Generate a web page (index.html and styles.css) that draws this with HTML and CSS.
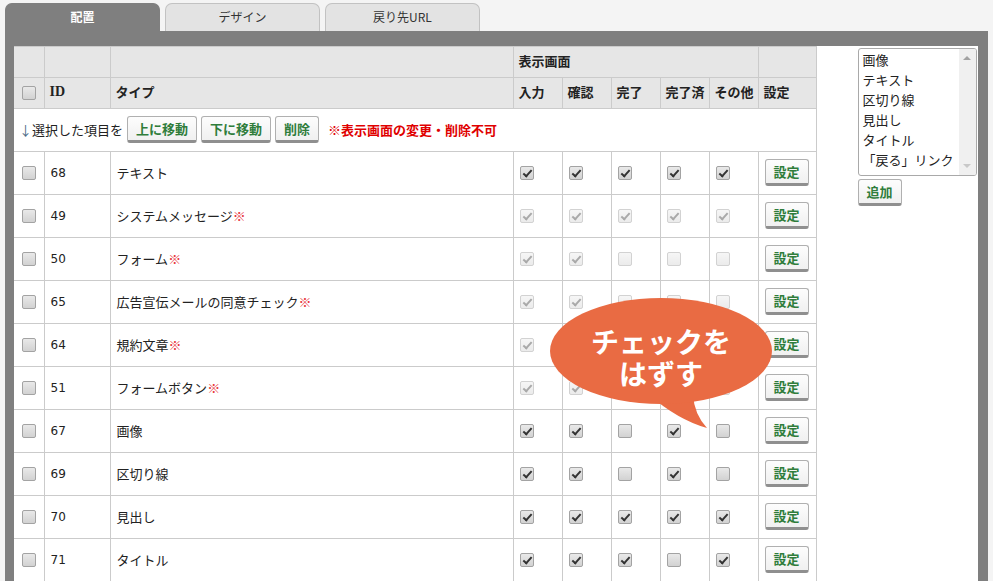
FILE: index.html
```html
<!DOCTYPE html>
<html lang="ja">
<head>
	<meta charset="UTF-8">
	<title>配置</title>
	<link rel="stylesheet" href="styles.css">
</head>
<body>
	<ul class="tabs">
		<li class="tab tab-active">配置</li>
		<li class="tab">デザイン</li>
		<li class="tab">戻り先URL</li>
	</ul>

	<div class="panel">
		<div class="sheet">
			<table class="parts">
				<colgroup>
					<col class="w-check">
					<col class="w-id">
					<col class="w-type">
					<col class="w-screen">
					<col class="w-screen">
					<col class="w-screen">
					<col class="w-screen">
					<col class="w-screen">
					<col class="w-edit">
				</colgroup>
				<thead>
					<tr class="head-top">
						<th></th>
						<th></th>
						<th></th>
						<th colspan="5">表示画面</th>
						<th></th>
					</tr>
					<tr class="head-sub">
						<th class="c-check"><input type="checkbox" class="cb"></th>
						<th class="c-id">ID</th>
						<th>タイプ</th>
						<th>入力</th>
						<th>確認</th>
						<th>完了</th>
						<th>完了済</th>
						<th>その他</th>
						<th>設定</th>
					</tr>
				</thead>
				<tbody>
					<tr class="actions">
						<td colspan="9">
							<div class="action-bar">
								<span class="lead"><span class="arrow">↓</span>選択した項目を</span>
								<button class="btn">上に移動</button>
								<button class="btn">下に移動</button>
								<button class="btn">削除</button>
								<span class="notice">※表示画面の変更・削除不可</span>
							</div>
						</td>
					</tr>

					<tr>
						<td class="c-check"><input type="checkbox" class="cb"></td>
						<td class="c-id">68</td>
						<td>テキスト</td>
						<td><input type="checkbox" class="cb" checked></td>
						<td><input type="checkbox" class="cb" checked></td>
						<td><input type="checkbox" class="cb" checked></td>
						<td><input type="checkbox" class="cb" checked></td>
						<td><input type="checkbox" class="cb" checked></td>
						<td><button class="btn">設定</button></td>
					</tr>
					<tr>
						<td class="c-check"><input type="checkbox" class="cb"></td>
						<td class="c-id">49</td>
						<td>システムメッセージ<span class="mark">※</span></td>
						<td><input type="checkbox" class="cb" checked disabled></td>
						<td><input type="checkbox" class="cb" checked disabled></td>
						<td><input type="checkbox" class="cb" checked disabled></td>
						<td><input type="checkbox" class="cb" checked disabled></td>
						<td><input type="checkbox" class="cb" checked disabled></td>
						<td><button class="btn">設定</button></td>
					</tr>
					<tr>
						<td class="c-check"><input type="checkbox" class="cb"></td>
						<td class="c-id">50</td>
						<td>フォーム<span class="mark">※</span></td>
						<td><input type="checkbox" class="cb" checked disabled></td>
						<td><input type="checkbox" class="cb" checked disabled></td>
						<td><input type="checkbox" class="cb" disabled></td>
						<td><input type="checkbox" class="cb" disabled></td>
						<td><input type="checkbox" class="cb" disabled></td>
						<td><button class="btn">設定</button></td>
					</tr>
					<tr>
						<td class="c-check"><input type="checkbox" class="cb"></td>
						<td class="c-id">65</td>
						<td>広告宣伝メールの同意チェック<span class="mark">※</span></td>
						<td><input type="checkbox" class="cb" checked disabled></td>
						<td><input type="checkbox" class="cb" checked disabled></td>
						<td><input type="checkbox" class="cb" disabled></td>
						<td><input type="checkbox" class="cb" disabled></td>
						<td><input type="checkbox" class="cb" disabled></td>
						<td><button class="btn">設定</button></td>
					</tr>
					<tr>
						<td class="c-check"><input type="checkbox" class="cb"></td>
						<td class="c-id">64</td>
						<td>規約文章<span class="mark">※</span></td>
						<td><input type="checkbox" class="cb" checked disabled></td>
						<td><input type="checkbox" class="cb" checked disabled></td>
						<td><input type="checkbox" class="cb" disabled></td>
						<td><input type="checkbox" class="cb" disabled></td>
						<td><input type="checkbox" class="cb" disabled></td>
						<td><button class="btn">設定</button></td>
					</tr>
					<tr>
						<td class="c-check"><input type="checkbox" class="cb"></td>
						<td class="c-id">51</td>
						<td>フォームボタン<span class="mark">※</span></td>
						<td><input type="checkbox" class="cb" checked disabled></td>
						<td><input type="checkbox" class="cb" checked disabled></td>
						<td><input type="checkbox" class="cb" disabled></td>
						<td><input type="checkbox" class="cb" disabled></td>
						<td><input type="checkbox" class="cb" disabled></td>
						<td><button class="btn">設定</button></td>
					</tr>
					<tr>
						<td class="c-check"><input type="checkbox" class="cb"></td>
						<td class="c-id">67</td>
						<td>画像</td>
						<td><input type="checkbox" class="cb" checked></td>
						<td><input type="checkbox" class="cb" checked></td>
						<td><input type="checkbox" class="cb"></td>
						<td><input type="checkbox" class="cb" checked></td>
						<td><input type="checkbox" class="cb"></td>
						<td><button class="btn">設定</button></td>
					</tr>
					<tr>
						<td class="c-check"><input type="checkbox" class="cb"></td>
						<td class="c-id">69</td>
						<td>区切り線</td>
						<td><input type="checkbox" class="cb" checked></td>
						<td><input type="checkbox" class="cb" checked></td>
						<td><input type="checkbox" class="cb"></td>
						<td><input type="checkbox" class="cb" checked></td>
						<td><input type="checkbox" class="cb"></td>
						<td><button class="btn">設定</button></td>
					</tr>
					<tr>
						<td class="c-check"><input type="checkbox" class="cb"></td>
						<td class="c-id">70</td>
						<td>見出し</td>
						<td><input type="checkbox" class="cb" checked></td>
						<td><input type="checkbox" class="cb" checked></td>
						<td><input type="checkbox" class="cb" checked></td>
						<td><input type="checkbox" class="cb" checked></td>
						<td><input type="checkbox" class="cb" checked></td>
						<td><button class="btn">設定</button></td>
					</tr>
					<tr>
						<td class="c-check"><input type="checkbox" class="cb"></td>
						<td class="c-id">71</td>
						<td>タイトル</td>
						<td><input type="checkbox" class="cb" checked></td>
						<td><input type="checkbox" class="cb" checked></td>
						<td><input type="checkbox" class="cb" checked></td>
						<td><input type="checkbox" class="cb"></td>
						<td><input type="checkbox" class="cb" checked></td>
						<td><button class="btn">設定</button></td>
					</tr>
				</tbody>
			</table>

			<div class="side">
				<div class="listbox">
					<ul class="options">
						<li>画像</li>
						<li>テキスト</li>
						<li>区切り線</li>
						<li>見出し</li>
						<li>タイトル</li>
						<li>「戻る」リンク</li>
					</ul>
					<div class="scroll">
						<span class="arr arr-up"></span>
						<span class="arr arr-down"></span>
					</div>
				</div>
				<button class="btn">追加</button>
			</div>

			<!-- 吹き出し -->
			<div class="balloon">
				<svg class="balloon-shape" width="230" height="135" viewBox="0 0 230 135">
					<path d="M98 96 Q128 122 157 130 Q144 116 143 96 Z" fill="#e96b43"/>
					<ellipse cx="111" cy="53" rx="111" ry="53" fill="#e96b43"/>
				</svg>
				<p class="balloon-text"><span>チェックを</span><span>はずす</span></p>
			</div>
		</div>
	</div>
</body>
</html>
```

FILE: styles.css
```css
body, p, ul, li {
	margin: 0;
	padding: 0;
}
body {
	background: #f4f4f4;
	font-family: "Noto Sans CJK JP", sans-serif;
	font-size: 13px;
	color: #222;
	overflow: hidden;
}

/* tabs */
.tabs {
	display: flex;
	gap: 5px;
	padding: 3px 5px 0;
	list-style: none;
}
.tab {
	width: 153px;
	height: 27px;
	border: 1px solid #c2c2c2;
	border-bottom: none;
	border-radius: 7px 7px 0 0;
	background: #e3e3e3;
	text-align: center;
	font-size: 12px;
	line-height: 26px;
	color: #333;
}
.tab-active {
	border-color: #7f7f7f;
	background: #7f7f7f;
	color: #fff;
	font-weight: bold;
}

/* panel */
.panel {
	margin: 0 5px;
	padding: 15px 10px 0 9px;
	background: #7f7f7f;
	height: 600px;
}
.sheet {
	position: relative;
	display: flex;
	align-items: flex-start;
	height: 100%;
	background: #fff;
}

/* table */
.parts {
	width: 802px;
	table-layout: fixed;
	border-collapse: collapse;
}
.w-check { width: 30px; }
.w-id { width: 66px; }
.w-type { width: 403px; }
.w-screen { width: 49px; }
.w-edit { width: 58px; }

.parts th,
.parts td {
	border: 1px solid #cbcbcb;
	text-align: left;
	vertical-align: middle;
	white-space: nowrap;
	line-height: 14px;
}
.parts th {
	height: 28px;
	padding: 0 5px 2px;
	background: #e6e6e6;
	font-weight: bold;
	font-size: 13px;
}
.parts td {
	height: 41px;
	padding: 0 6px 1px;
}
.parts tr > :first-child {
	border-left: none;
}
.parts .c-check {
	padding: 0;
}
.parts .c-check .cb {
	margin: 0 auto;
}
.parts th.c-id {
	font-family: "Liberation Serif", serif;
	font-size: 14px;
}
.parts td.c-id {
	font-family: "DejaVu Sans", sans-serif;
	font-size: 12px;
}
.parts td > .cb,
.parts th > .cb,
.parts td > .btn {
	display: block;
}
.mark {
	color: #e8343c;
}

/* action row */
.parts .actions td {
	padding: 0 5px 1px;
}
.action-bar {
	display: flex;
	align-items: center;
	gap: 4px;
}
.arrow {
	color: #4a6b86;
}
.notice {
	margin-left: 5px;
	color: #e00000;
	font-weight: bold;
}

/* buttons */
.btn {
	height: 27px;
	padding: 0 8px;
	border: 1px solid #b0b0b0;
	border-bottom: 3px solid #8f8f8f;
	border-radius: 3px;
	background: linear-gradient(#fdfdfd, #f0f0f0);
	font-family: "Noto Sans CJK JP", sans-serif;
	font-size: 13px;
	font-weight: bold;
	line-height: 21px;
	color: #2f7d3b;
}

/* checkboxes */
.cb {
	position: relative;
	appearance: none;
	-webkit-appearance: none;
	width: 14px;
	height: 14px;
	margin: 0;
	border: 1px solid #a3a3a3;
	border-radius: 2px;
	background: linear-gradient(#e9e9e9, #d2d2d2);
}
.cb:checked::after {
	content: "";
	position: absolute;
	left: 4px;
	top: 1px;
	width: 3px;
	height: 7px;
	border: solid #333;
	border-width: 0 2.5px 2.5px 0;
	transform: rotate(42deg);
}
.cb:disabled {
	border-color: #d2d2d2;
	background: linear-gradient(#f6f6f6, #ebebeb);
}
.cb:disabled:checked::after {
	border-color: #a9a9a9;
}

/* side list */
.side {
	margin: 2px 0 0 41px;
}
.listbox {
	display: flex;
	width: 117px;
	height: 126px;
	border: 1px solid #a9a9a9;
	border-radius: 3px;
	background: #fff;
	overflow: hidden;
}
.options {
	flex: 1;
	padding: 1px 0 0 4px;
	list-style: none;
	overflow: hidden;
	white-space: nowrap;
	line-height: 20px;
}
.scroll {
	display: flex;
	flex-direction: column;
	justify-content: space-between;
	align-items: center;
	width: 17px;
	padding: 7px 0;
	background: #f0f0f0;
}
.arr {
	width: 0;
	height: 0;
	border-left: 4px solid transparent;
	border-right: 4px solid transparent;
}
.arr-up {
	border-bottom: 4px solid #a3a3a3;
}
.arr-down {
	border-top: 4px solid #c8c8c8;
}
.side .btn {
	margin-top: 3px;
}

/* callout */
.balloon {
	position: absolute;
	left: 536px;
	top: 252px;
	width: 230px;
	height: 135px;
}
.balloon-shape {
	display: block;
}
.balloon-text {
	position: absolute;
	left: 0;
	top: 27px;
	display: flex;
	flex-direction: column;
	align-items: center;
	width: 222px;
	color: #fff;
	font-size: 28px;
	font-weight: bold;
	line-height: 32px;
}
.balloon-text span {
	height: 32px;
}
```
